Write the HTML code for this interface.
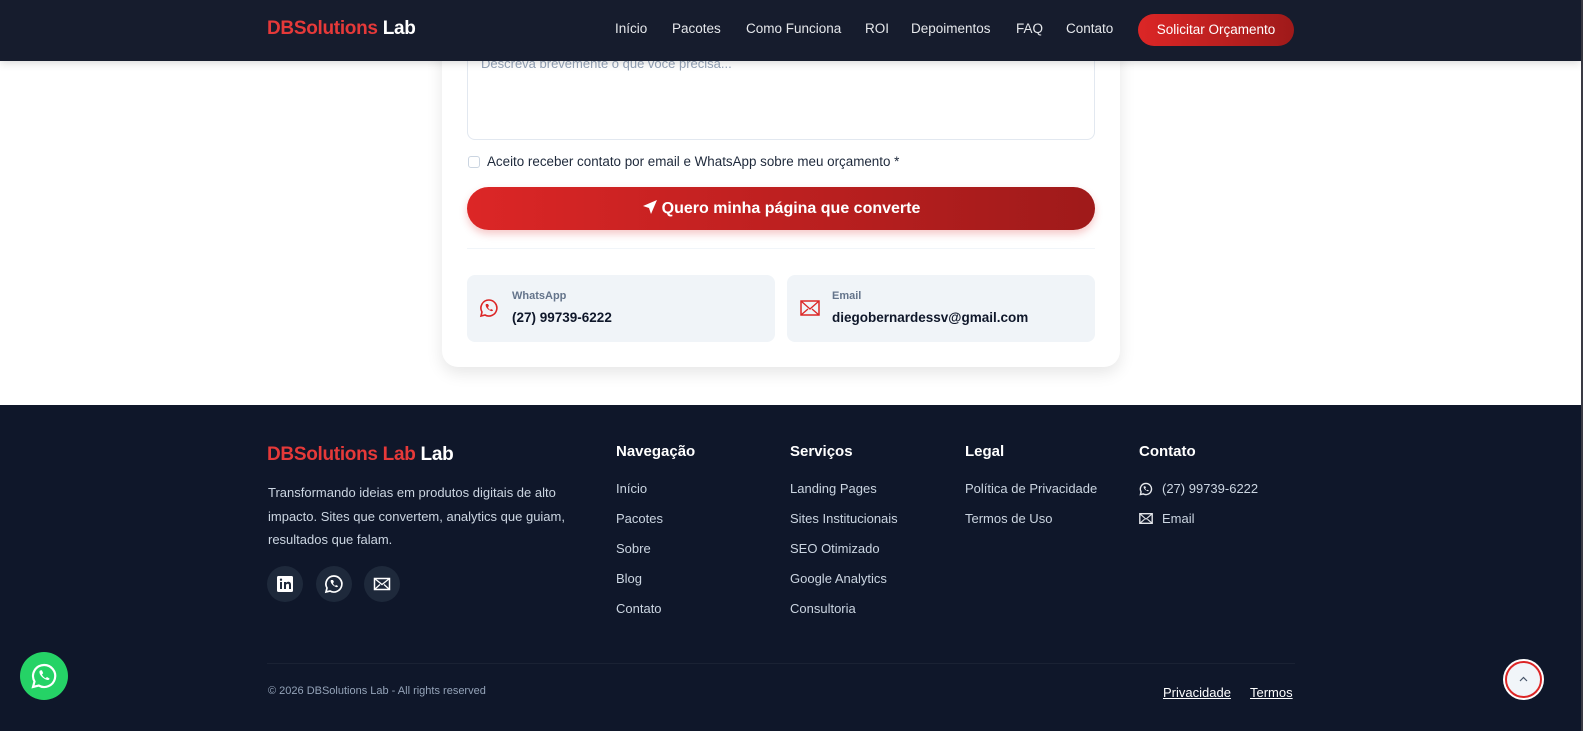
<!DOCTYPE html>
<html><head><meta charset="utf-8"><style>
*{margin:0;padding:0;box-sizing:border-box}
body{width:1583px;height:731px;overflow:hidden;background:#fff;font-family:"Liberation Sans",sans-serif;position:relative}
.a{position:absolute;white-space:nowrap}
nav{position:absolute;left:0;top:0;width:1581px;height:61px;background:#161c2d;box-shadow:0 2px 8px rgba(0,0,0,.15);z-index:5}
.logo{font-weight:700;font-size:19px;letter-spacing:-.3px}
.logo .r{color:#e53939}.logo .w{color:#fff}
.nl{color:#e5e7eb;font-size:13.5px;top:21px}
.btn{left:1138px;top:14px;width:156px;height:32px;border-radius:16px;background:linear-gradient(90deg,#dc2626,#9f1a1a);color:#fff;font-size:13.5px;text-align:center;line-height:32px}
.card{position:absolute;left:442px;top:-40px;width:678px;height:407px;background:#fff;border-radius:16px;box-shadow:0 6px 16px rgba(0,0,0,.1)}
footer{position:absolute;left:0;top:405px;width:1581px;height:326px;background:#0f172a}
.h{color:#fff;font-weight:700;font-size:15px}
.f{color:#cbd5e1;font-size:13px}
.sc{position:absolute;width:36px;height:36px;border-radius:50%;background:#1e293b;top:566px}
</style></head><body>
<nav>
<div class="a logo" style="left:267px;top:18px"><span class="r">DBSolutions</span> <span class="w">Lab</span></div>
<div class="a nl" style="left:615px">Início</div>
<div class="a nl" style="left:672px">Pacotes</div>
<div class="a nl" style="left:746px">Como Funciona</div>
<div class="a nl" style="left:865px">ROI</div>
<div class="a nl" style="left:911px">Depoimentos</div>
<div class="a nl" style="left:1016px">FAQ</div>
<div class="a nl" style="left:1066px">Contato</div>
<div class="a btn">Solicitar Orçamento</div>
</nav>
<div class="card"></div>
<div class="a" style="left:467px;top:40px;width:628px;height:100px;border:1px solid #e2e8f0;border-radius:8px"></div>
<div class="a" style="left:481px;top:56px;color:#94a3b8;font-size:13px">Descreva brevemente o que você precisa...</div>
<div class="a" style="left:468px;top:156px;width:12px;height:12px;border:1px solid #cbd5e1;border-radius:3px"></div>
<div class="a" style="left:487px;top:154px;color:#1e293b;font-size:13.4px">Aceito receber contato por email e WhatsApp sobre meu orçamento *</div>
<div class="a" style="left:467px;top:187px;width:628px;height:43px;border-radius:22px;background:linear-gradient(90deg,#dc2626,#9f1a1a);box-shadow:0 4px 8px rgba(220,38,38,.25);color:#fff;font-weight:700;font-size:16px;text-align:center;line-height:43px">
<svg width="16" height="16" viewBox="0 0 16 16" style="vertical-align:-2px;margin-right:4px"><path d="M15 1L1 7l6 2 2 6z" fill="#fff"/></svg>Quero minha página que converte</div>
<div class="a" style="left:467px;top:248px;width:628px;height:1px;background:#f1f5f9"></div>
<div class="a" style="left:467px;top:275px;width:308px;height:67px;background:#f0f4f8;border-radius:8px"></div>
<div class="a" style="left:787px;top:275px;width:308px;height:67px;background:#f0f4f8;border-radius:8px"></div>
<svg class="a" style="left:479px;top:298px" width="20" height="20" viewBox="0 0 20 20"><path d="M10 2a8 8 0 0 0-7 12l-1 4 4-1a8 8 0 1 0 4-15z" fill="none" stroke="#dc2626" stroke-width="1.6"/><path d="M7 6c-1 1 0 4 3 6s4 1 4 0l-2-1-1 1c-1-1-2-2-2-3l1-1-1-2z" fill="#dc2626"/></svg>
<div class="a" style="left:512px;top:290px;color:#64748b;font-size:11px;font-weight:700">WhatsApp</div>
<div class="a" style="left:512px;top:310px;color:#0f172a;font-size:13.5px;font-weight:700">(27) 99739-6222</div>
<svg class="a" style="left:800px;top:300px" width="20" height="16" viewBox="0 0 20 16"><rect x="1" y="1" width="18" height="14" fill="none" stroke="#dc2626" stroke-width="1.5"/><path d="M1 1l9 8 9-8M1 15l7-6M19 15l-7-6" fill="none" stroke="#dc2626" stroke-width="1.3"/></svg>
<div class="a" style="left:832px;top:290px;color:#64748b;font-size:11px;font-weight:700">Email</div>
<div class="a" style="left:832px;top:310px;color:#0f172a;font-size:13.5px;font-weight:700">diegobernardessv@gmail.com</div>

<footer></footer>
<div class="a logo" style="left:267px;top:444px"><span class="r">DBSolutions Lab</span> <span class="w">Lab</span></div>
<div class="a f" style="left:268px;top:481px;line-height:23.5px;white-space:normal;width:330px">Transformando ideias em produtos digitais de alto impacto. Sites que convertem, analytics que guiam, resultados que falam.</div>
<div class="sc" style="left:267px"><svg width="36" height="36" viewBox="0 0 36 36"><rect x="10" y="10" width="16" height="16" rx="1.5" fill="#fff"/><path d="M13 16h2v7h-2zM14 12.5a1.2 1.2 0 1 1 0 2.4 1.2 1.2 0 0 1 0-2.4zM17 16h2v1c.5-.8 1.3-1.2 2.3-1.2 1.7 0 2.7 1 2.7 3V23h-2v-3.7c0-1-.4-1.6-1.2-1.6S19 18.3 19 19.3V23h-2z" fill="#1e293b"/></svg></div>
<div class="sc" style="left:316px"><svg width="36" height="36" viewBox="0 0 36 36"><path d="M18 10a8 8 0 0 0-7 12l-1 4 4-1a8 8 0 1 0 4-15z" fill="none" stroke="#fff" stroke-width="1.7"/><path d="M15 14c-1 1 0 4 3 6s4 1 4 0l-2-1-1 1c-1-1-2-2-2-3l1-1-1-2z" fill="#fff"/></svg></div>
<div class="sc" style="left:364px"><svg width="36" height="36" viewBox="0 0 36 36"><rect x="10.5" y="12.5" width="15" height="11" fill="none" stroke="#fff" stroke-width="1.5"/><path d="M10.5 12.5l7.5 6 7.5-6M10.5 23.5l5.5-5M25.5 23.5l-5.5-5" fill="none" stroke="#fff" stroke-width="1.3"/></svg></div>

<div class="a h" style="left:616px;top:443px">Navegação</div>
<div class="a f" style="left:616px;top:481px">Início</div>
<div class="a f" style="left:616px;top:511px">Pacotes</div>
<div class="a f" style="left:616px;top:541px">Sobre</div>
<div class="a f" style="left:616px;top:571px">Blog</div>
<div class="a f" style="left:616px;top:601px">Contato</div>
<div class="a h" style="left:790px;top:443px">Serviços</div>
<div class="a f" style="left:790px;top:481px">Landing Pages</div>
<div class="a f" style="left:790px;top:511px">Sites Institucionais</div>
<div class="a f" style="left:790px;top:541px">SEO Otimizado</div>
<div class="a f" style="left:790px;top:571px">Google Analytics</div>
<div class="a f" style="left:790px;top:601px">Consultoria</div>
<div class="a h" style="left:965px;top:443px">Legal</div>
<div class="a f" style="left:965px;top:481px">Política de Privacidade</div>
<div class="a f" style="left:965px;top:511px">Termos de Uso</div>
<div class="a h" style="left:1139px;top:443px">Contato</div>
<svg class="a" style="left:1139px;top:482px" width="14" height="14" viewBox="0 0 20 20"><path d="M10 2a8 8 0 0 0-7 12l-1 4 4-1a8 8 0 1 0 4-15z" fill="none" stroke="#e5e7eb" stroke-width="2"/><path d="M7 6c-1 1 0 4 3 6s4 1 4 0l-2-1-1 1c-1-1-2-2-2-3l1-1-1-2z" fill="#e5e7eb"/></svg>
<div class="a f" style="left:1162px;top:481px">(27) 99739-6222</div>
<svg class="a" style="left:1139px;top:513px" width="14" height="11" viewBox="0 0 20 16"><rect x="1" y="1" width="18" height="14" fill="none" stroke="#e5e7eb" stroke-width="2"/><path d="M1 1l9 8 9-8M1 15l7-6M19 15l-7-6" fill="none" stroke="#e5e7eb" stroke-width="1.6"/></svg>
<div class="a f" style="left:1162px;top:511px">Email</div>

<div class="a" style="left:267px;top:663px;width:1028px;height:1px;background:#1a2234"></div>
<div class="a" style="left:268px;top:685px;color:#94a3b8;font-size:11px">© 2026 DBSolutions Lab - All rights reserved</div>
<div class="a" style="left:1163px;top:685px;color:#fff;font-size:13px;text-decoration:underline">Privacidade</div>
<div class="a" style="left:1250px;top:685px;color:#fff;font-size:13px;text-decoration:underline">Termos</div>

<div class="a" style="left:20px;top:652px;width:48px;height:48px;border-radius:50%;background:#25d366"><svg width="48" height="48" viewBox="0 0 48 48"><path d="M24 13a11 11 0 0 0-9.5 16.5L13 35l5.7-1.5A11 11 0 1 0 24 13z" fill="none" stroke="#fff" stroke-width="2.2"/><path d="M20 18.5c-1.5 1.5 0 5.5 4 8s5.5 1.5 5.5 0l-2.5-1.5-1.5 1.2c-1.5-.8-3-2.300-3.5-3.700l1.2-1.4-1.3-2.8z" fill="#fff"/></svg></div>
<div class="a" style="left:1505px;top:661px;width:37px;height:37px;border-radius:50%;background:#f1f5f9;border:2px solid #dc2626;box-shadow:0 0 0 2px #fff"><svg width="33" height="33" viewBox="0 0 33 33"><path d="M13 18l3.5-3.5L20 18" fill="none" stroke="#475569" stroke-width="1.2"/></svg></div>
<div class="a" style="left:1581px;top:0;width:2px;height:731px;background:#3a3a44"></div>
</body></html>
